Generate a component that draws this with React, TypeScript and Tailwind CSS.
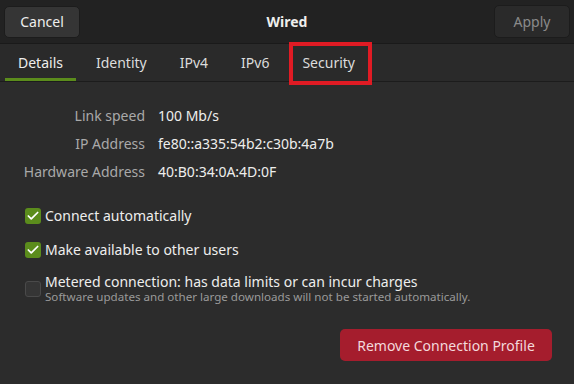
import { Check } from "lucide-react";

const tabs = ["Details", "Identity", "IPv4", "IPv6", "Security"];

function CheckBox({ checked }: { checked: boolean }) {
  if (checked) {
    return (
      <span className="flex h-4 w-4 shrink-0 items-center justify-center rounded-[3px] bg-[#5b8c1c]">
        <Check className="h-3.5 w-3.5 text-white" strokeWidth={3} />
      </span>
    );
  }
  return <span className="block h-4 w-4 shrink-0 rounded-[3px] border border-[#4a4a4a] bg-[#353535]" />;
}

export default function App() {
  return (
    <div
      className="flex h-[384px] w-[574px] flex-col overflow-hidden bg-[#2c2c2c] text-[14px] text-[#eeeeec]"
      style={{ fontFamily: '"Noto Sans", "Open Sans", sans-serif' }}
    >
      {/* Header bar */}
      <div className="flex h-[44px] shrink-0 items-center justify-between border-b border-[#1a1a1a] bg-[#222222] px-1">
        <button className="flex h-[32px] w-[76px] items-center justify-center rounded-[5px] border border-[#1c1c1c] bg-[#353535] text-[#eeeeec]">
          Cancel
        </button>
        <span className="font-bold">Wired</span>
        <button className="flex h-[33px] w-[76px] items-center justify-center rounded-[5px] border border-[#1c1c1c] bg-[#2a2a2a] text-[#8a8a8a]">
          Apply
        </button>
      </div>

      {/* Tabs */}
      <div className="relative flex h-[38px] shrink-0 items-stretch gap-[7px] border-b border-[#1c1c1c] bg-[#2a2a2a] pl-[5px]">
        {tabs.map((t, i) => (
          <div
            key={t}
            className={
              "relative flex items-center px-[13px] " +
              (i === 0 ? "border-b-[3px] border-[#5b8c1c] pt-[3px] text-[#eeeeec]" : "text-[#dcdcdc]")
            }
          >
            {t}
            {i === 4 && (
              <span className="pointer-events-none absolute -bottom-[4px] -left-[0px] -right-[4px] -top-[2px] border-[4px] border-[#e01b24]" />
            )}
          </div>
        ))}
      </div>

      {/* Details */}
      <div className="grid grid-cols-[145px_1fr] gap-x-[13px] gap-y-[7px] pt-[23px]">
        <span className="text-right text-[#a9a9a9]">Link speed</span>
        <span>100 Mb/s</span>
        <span className="text-right text-[#a9a9a9]">IP Address</span>
        <span>fe80::a335:54b2:c30b:4a7b</span>
        <span className="text-right text-[#a9a9a9]">Hardware Address</span>
        <span>40:B0:34:0A:4D:0F</span>
      </div>

      <div className="flex flex-col gap-[13px] pl-[25px] pt-[23px]">
        <label className="flex items-center gap-[4px]">
          <CheckBox checked />
          <span>Connect automatically</span>
        </label>
        <label className="flex items-center gap-[4px]">
          <CheckBox checked />
          <span>Make available to other users</span>
        </label>
        <label className="flex items-center gap-[4px]">
          <CheckBox checked={false} />
          <span className="flex flex-col pt-[1px]">
            <span className="leading-[16px]">Metered connection: has data limits or can incur charges</span>
            <span className="text-[11.6px] leading-[14px] text-[#9a9a9a]">
              Software updates and other large downloads will not be started automatically.
            </span>
          </span>
        </label>
      </div>

      <div className="flex justify-end pr-[22px] pt-[25px]">
        <button className="flex h-[32px] w-[212px] items-center justify-center rounded-[5px] bg-[#a51d2d] text-[#f3d9dc]">
          Remove Connection Profile
        </button>
      </div>
    </div>
  );
}
